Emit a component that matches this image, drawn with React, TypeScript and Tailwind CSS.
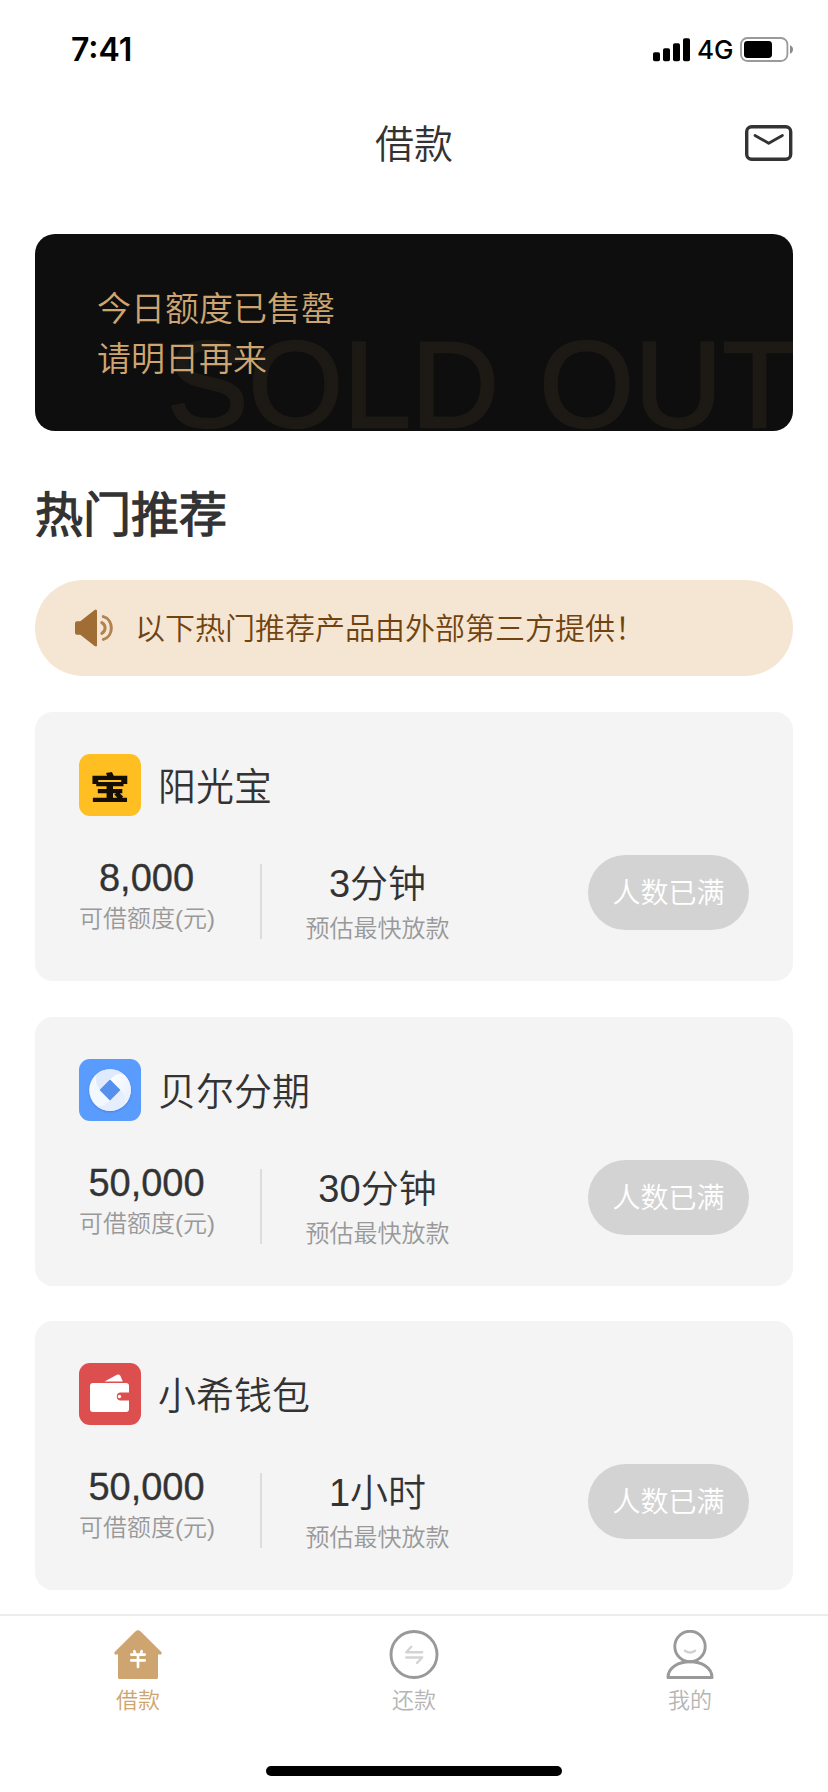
import type { ReactNode } from "react";

const MailIcon = () => (
  <svg className="h-9 w-12" viewBox="0 0 48 36" fill="none" stroke="#333" strokeLinecap="round" strokeLinejoin="round">
    <rect x="1.7" y="1.7" width="44" height="32.6" rx="5" strokeWidth="3.4" />
    <path d="M10 10.5 L23.7 18.3 L37.4 10.5" strokeWidth="2.8" />
  </svg>
);

const StatusIcons = () => (
  <div className="flex items-center">
    <svg className="h-6 w-[37px]" viewBox="0 0 37 24">
      <rect x="0" y="14.3" width="7" height="9" rx="1.8" />
      <rect x="10" y="10.3" width="7" height="13" rx="1.8" />
      <rect x="20" y="5.3" width="7" height="18" rx="1.8" />
      <rect x="30" y="0.3" width="7" height="23" rx="1.8" />
    </svg>
    <span className="ml-[7px] mt-px w-[37px] whitespace-nowrap font-['Inter',sans-serif] text-[26px] font-medium leading-[26px]">4G</span>
    <svg className="ml-[6px] h-[25px] w-[54px]" viewBox="0 0 54 25">
      <rect x="1" y="1" width="46.4" height="23" rx="6.4" fill="none" stroke="#9a9a9a" strokeWidth="1.8" />
      <rect x="4" y="4" width="28" height="17" rx="3.4" />
      <path d="M50 8.3 C54 9.5 54 15.5 50 16.7 Z" fill="#8a8a8a" />
    </svg>
  </div>
);

const SpeakerIcon = () => (
  <svg className="h-[38px] w-[39px]" viewBox="0 0 39 38" fill="none">
    <path
      d="M2 12.3 H5.3 L19.6 0.9 Q22 -0.3 22 2 V36 Q22 38.3 19.6 37.1 L5.3 25.7 H2 Q0 25.7 0 23.7 V14.3 Q0 12.3 2 12.3 Z"
      fill="#a06d35"
    />
    <path d="M26.8 13.6 C31.2 16.2 31.2 21.8 26.8 24.4" stroke="#b28350" strokeWidth="3" strokeLinecap="round" />
    <path d="M28.3 7.6 C39 10.4 39 27.6 28.3 30.4" stroke="#b28350" strokeWidth="3" strokeLinecap="round" />
  </svg>
);

const SunLogo = () => (
  <div className="flex h-[62px] w-[62px] items-center justify-center rounded-[11px] bg-[#ffbf22]">
    <span className="inline-block scale-x-[1.12] scale-y-[0.86] font-['Noto_Sans_CJK_SC',sans-serif] text-[36px] font-black leading-[62px] text-[#140e04]">
      宝
    </span>
  </div>
);

const CoinLogo = () => (
  <svg className="h-[62px] w-[62px] rounded-[11px]" viewBox="0 0 62 62">
    <defs>
      <linearGradient id="coin" x1="0" y1="0" x2="1" y2="1">
        <stop offset="0" stopColor="#fff" />
        <stop offset="1" stopColor="#e6eefd" />
      </linearGradient>
      <filter id="coinShadow" x="-20%" y="-20%" width="140%" height="140%">
        <feDropShadow dx="0" dy="1" stdDeviation="1.2" floodColor="#2b62c0" floodOpacity="0.5" />
      </filter>
    </defs>
    <rect width="62" height="62" fill="#5a9bfe" />
    <circle cx="31" cy="31" r="20.8" fill="#f3f7fe" filter="url(#coinShadow)" />
    <path d="M17.500 15.200 A20.800 20.800 0 0 1 46 16.500 Q38 12 31 21 L21 31 Q15.500 24 17.500 15.200Z" fill="#e0eafd" />
    <path d="M46 16.500 A20.800 20.800 0 0 1 45.500 46 Q49 37 41 31 L31 21 Q38 12 46 16.500Z" fill="url(#coin)" />
    <path d="M45.500 46 A20.800 20.800 0 0 1 17 46.500 Q25 49 31 41 L41 31 Q49 37 45.500 46Z" fill="#e6eefd" />
    <path d="M31 21.600 L40.400 31 L31 40.400 L21.600 31 Z" fill="#5590ec" stroke="#5590ec" strokeWidth="1.600" strokeLinejoin="round" />
  </svg>
);

const WalletLogo = () => (
  <svg className="h-[62px] w-[62px] rounded-[11px]" viewBox="0 0 62 62">
    <rect width="62" height="62" fill="#dd4e4e" />
    <path d="M25.500 18.400 L37.500 11.900 Q40 11 41.500 13 L43.800 18.400 Z" fill="#fff" />
    <path
      d="M14 20 H47 Q50 20 50 23 V29.500 H41 A4.100 4.100 0 0 0 41 37.500 H50 V46 Q50 49 47 49 H14 Q11 49 11 46 V23 Q11 20 14 20 Z"
      fill="#fff"
    />
    <circle cx="40.500" cy="33.500" r="1.700" fill="#fff" />
  </svg>
);

const HomeIcon = () => (
  <svg className="h-[50px] w-[50px]" viewBox="0 0 50 50" fill="none">
    <path
      d="M22.600 1.300 Q25 -0.700 27.400 1.300 L48.300 22 Q49.400 23.600 47.800 24.600 H45 V47.400 Q45 49 43.400 49 H6.600 Q5 49 5 47.400 V24.600 H2.200 Q0.600 23.600 1.700 22 Z"
      fill="#cea571"
    />
    <path d="M18.300 24.600 H31.700 M18.300 30.400 H31.700 M25 25 V37 M21.300 21.200 L22.300 24 M28.700 21.200 L27.700 24" stroke="#fff" strokeWidth="2.700" strokeLinecap="round" />
  </svg>
);

const RepayIcon = () => (
  <svg className="h-[50px] w-[50px]" viewBox="0 0 50 50" fill="none">
    <circle cx="25" cy="24.500" r="23" stroke="#999" strokeWidth="2.900" />
    <path d="M33.200 22.300 H17.200 L22.300 16.800 M17.200 27.500 H33.200 L28 33" stroke="#d4d4d4" strokeWidth="2.400" strokeLinecap="round" strokeLinejoin="round" />
  </svg>
);

const UserIcon = () => (
  <svg className="h-[50px] w-[50px]" viewBox="0 0 50 50" fill="none">
    <circle cx="25" cy="16.500" r="15.200" stroke="#999" strokeWidth="2.900" />
    <path d="M3 47.500 C3 26.500 47 26.500 47 47.500 Z" stroke="#999" strokeWidth="3" strokeLinejoin="round" />
    <path d="M20 20.800 Q25 24.400 30 20.800" stroke="#d0d0d0" strokeWidth="2.400" strokeLinecap="round" />
  </svg>
);

type Loan = { name: string; logo: ReactNode; amount: string; time: string };

const loans: Loan[] = [
  { name: "阳光宝", logo: <SunLogo />, amount: "8,000", time: "3分钟" },
  { name: "贝尔分期", logo: <CoinLogo />, amount: "50,000", time: "30分钟" },
  { name: "小希钱包", logo: <WalletLogo />, amount: "50,000", time: "1小时" },
];

const LoanCard = ({ name, logo, amount, time }: Loan) => (
  <article className="h-[269px] rounded-[18px] bg-[#f4f4f4] px-11 pt-[42px]">
    <div className="flex h-[62px] items-center gap-[17px]">
      {logo}
      <h3 className="pt-1 text-[38px] leading-[58px]">{name}</h3>
    </div>
    <div className="mt-9 flex h-[90px]">
      <div className="w-[135px] whitespace-nowrap pt-1 text-center">
        <p className="text-[38px] leading-[44px] [-webkit-text-stroke:0.3px_#333]">{amount}</p>
        <p className="pt-px text-[24px] leading-[36px] text-[#999]">可借额度(元)</p>
      </div>
      <div className="ml-[46px] mt-[12px] h-[75px] w-[2px] bg-[#dcdcdc]" />
      <div className="ml-[43px] w-[145px] whitespace-nowrap pt-1.5 text-center">
        <p className="text-[38px] leading-[52px]">{time}</p>
        <p className="pt-px text-[24px] leading-[36px] text-[#999]">预估最快放款</p>
      </div>
      <button className="ml-auto mt-[3px] h-[75px] w-[161px] rounded-full bg-[#d3d3d3] pt-0.5 text-[28px] leading-[73px] text-white">
        人数已满
      </button>
    </div>
  </article>
);

const tabs = [
  { label: "借款", icon: <HomeIcon />, color: "text-[#cea571]" },
  { label: "还款", icon: <RepayIcon />, color: "text-[#b5b5b5]" },
  { label: "我的", icon: <UserIcon />, color: "text-[#b5b5b5]" },
];

export default function App() {
  return (
    <div className="flex h-[1792px] w-[828px] flex-col overflow-hidden bg-white font-['Liberation_Sans','Noto_Sans_CJK_SC_DemiLight','Noto_Sans_CJK_SC',sans-serif] font-[350] text-[#333]">
      <div className="flex h-[99px] items-center justify-between pl-[71px] pr-[34px] text-black">
        <span className="font-['Inter',sans-serif] text-[32px] font-semibold leading-10">7:41</span>
        <StatusIcons />
      </div>
      <header className="grid h-[90px] grid-cols-[1fr_auto_1fr] items-center">
        <h1 className="col-start-2 pt-0.5 text-[39px] leading-[88px]">借款</h1>
        <div className="justify-self-end pb-0.5 pr-[35px]">
          <MailIcon />
        </div>
      </header>

      <main className="flex flex-1 flex-col px-[35px] pt-[45px]">
        <section className="relative h-[197px] overflow-hidden rounded-[20px] bg-[#0e0e0e] pl-[62px] pt-[50px] text-[34px] leading-[50px] text-[#cea571]">
          <div className="absolute left-[132px] top-[81px] flex whitespace-nowrap text-[122px] leading-[140px] text-[#1d1914] [-webkit-text-stroke:2.5px_#1d1914]">
            <span>SOLD</span>
            <span className="ml-[40px]">OUT</span>
          </div>
          <p className="relative">今日额度已售罄</p>
          <p className="relative">请明日再来</p>
        </section>

        <h2 className="mt-[50px] text-[48px] font-bold leading-[70px]">热门推荐</h2>

        <div className="mt-[29px] flex h-24 items-center rounded-full bg-[#f5e6d3] pl-10 text-[#704311]">
          <SpeakerIcon />
          <span className="ml-[21px] pt-0.5 text-[30px] leading-[94px]">以下热门推荐产品由外部第三方提供！</span>
        </div>

        <div className="mt-9 flex flex-col gap-[35.500px]">
          {loans.map((loan) => (
            <LoanCard key={loan.name} {...loan} />
          ))}
        </div>
      </main>

      <nav className="flex h-[178px] flex-col items-center border-t-2 border-[#ececec]">
        <div className="grid w-full grid-cols-3 pt-3.5">
          {tabs.map((tab) => (
            <div key={tab.label} className={`flex flex-col items-center text-[22px] leading-10 ${tab.color}`}>
              {tab.icon}
              <span className="pt-px">{tab.label}</span>
            </div>
          ))}
        </div>
        <div className="mt-auto mb-4 h-2.5 w-[296px] rounded-full bg-black" />
      </nav>
    </div>
  );
}
